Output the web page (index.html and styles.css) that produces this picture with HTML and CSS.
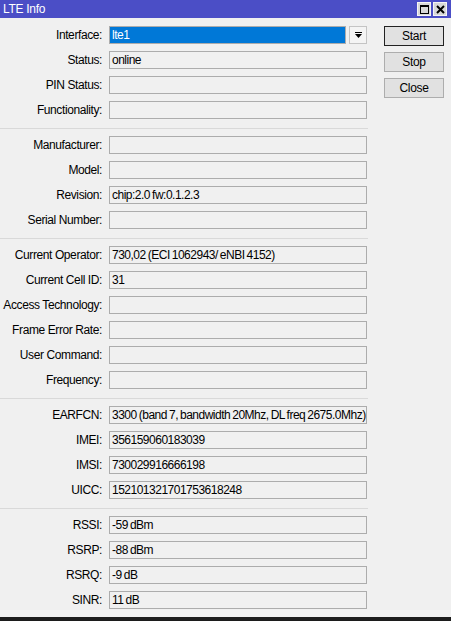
FILE: index.html
```html
<!DOCTYPE html>
<html lang="en">
<head>
    <meta charset="UTF-8">
    <meta name="viewport" content="width=device-width, initial-scale=1.0">
    <title>LTE Info</title>
    <link rel="stylesheet" href="styles.css">
</head>
<body>
    <div class="window">
        <div class="titlebar">
            <span class="title">LTE Info</span>
            <div class="title-btns">
                <span class="tb-btn">
                    <svg width="9" height="9" viewBox="0 0 9 9"><rect x="0.5" y="0.5" width="8" height="8" fill="none" stroke="#000"/><rect x="0" y="0" width="9" height="2" fill="#000"/></svg>
                </span>
                <span class="tb-btn">
                    <svg width="9" height="9" viewBox="0 0 9 9"><path d="M1 1L8 8M8 1L1 8" stroke="#000" stroke-width="2"/></svg>
                </span>
            </div>
        </div>

        <div class="content">
            <div class="form">
                <div class="group">
                    <div class="row">
                        <label class="label">Interface:</label>
                        <div class="combo">
                            <div class="field selected">lte1</div>
                            <span class="drop-btn">
                                <svg width="7" height="7" viewBox="0 0 7 7"><rect x="0" y="0" width="7" height="1" fill="#000"/><path d="M0 2H7L3.5 6Z" fill="#000"/></svg>
                            </span>
                        </div>
                    </div>
                    <div class="row"><label class="label">Status:</label><div class="field">online</div></div>
                    <div class="row"><label class="label">PIN Status:</label><div class="field"></div></div>
                    <div class="row"><label class="label">Functionality:</label><div class="field"></div></div>
                </div>

                <div class="group">
                    <div class="row"><label class="label">Manufacturer:</label><div class="field"></div></div>
                    <div class="row"><label class="label">Model:</label><div class="field"></div></div>
                    <div class="row"><label class="label">Revision:</label><div class="field">chip:2.0 fw:0.1.2.3</div></div>
                    <div class="row"><label class="label">Serial Number:</label><div class="field"></div></div>
                </div>

                <div class="group">
                    <div class="row"><label class="label">Current Operator:</label><div class="field">730,02 (ECI 1062943/ eNBI 4152)</div></div>
                    <div class="row"><label class="label">Current Cell ID:</label><div class="field">31</div></div>
                    <div class="row"><label class="label">Access Technology:</label><div class="field"></div></div>
                    <div class="row"><label class="label">Frame Error Rate:</label><div class="field"></div></div>
                    <div class="row"><label class="label">User Command:</label><div class="field"></div></div>
                    <div class="row"><label class="label">Frequency:</label><div class="field"></div></div>
                </div>

                <div class="group">
                    <div class="row"><label class="label">EARFCN:</label><div class="field">3300 (band 7, bandwidth 20Mhz, DL freq 2675.0Mhz)</div></div>
                    <div class="row"><label class="label">IMEI:</label><div class="field">356159060183039</div></div>
                    <div class="row"><label class="label">IMSI:</label><div class="field">730029916666198</div></div>
                    <div class="row"><label class="label">UICC:</label><div class="field">152101321701753618248</div></div>
                </div>

                <div class="group">
                    <div class="row"><label class="label">RSSI:</label><div class="field">-59 dBm</div></div>
                    <div class="row"><label class="label">RSRP:</label><div class="field">-88 dBm</div></div>
                    <div class="row"><label class="label">RSRQ:</label><div class="field">-9 dB</div></div>
                    <div class="row"><label class="label">SINR:</label><div class="field">11 dB</div></div>
                </div>
            </div>

            <div class="actions">
                <button class="btn default">Start</button>
                <button class="btn">Stop</button>
                <button class="btn">Close</button>
            </div>
        </div>
    </div>
</body>
</html>
```

FILE: styles.css
```css
/* Winbox style dialog */
* {
    box-sizing: border-box;
}
html, body {
    margin: 0;
    padding: 0;
}
body {
    width: 451px;
    height: 621px;
    overflow: hidden;
    background: #f0f0f0;
    font-family: "Liberation Sans", Arial, sans-serif;
    font-size: 12px;
    letter-spacing: -0.4px;
    color: #000;
}
.window {
    height: 621px;
    display: flex;
    flex-direction: column;
    border-bottom: 4px solid #1c1c1c;
}
.titlebar {
    flex-shrink: 0;
    height: 18px;
    background: #4b4ec6;
    display: flex;
    align-items: center;
    justify-content: space-between;
    padding: 0 4px 0 3px;
}
.title {
    color: #fff;
    font-size: 12px;
    letter-spacing: -0.3px;
}
.title-btns {
    display: flex;
    gap: 2px;
}
.tb-btn {
    width: 14px;
    height: 14px;
    background: #d8d8d8;
    border: 1px solid #f4f4f4;
    display: flex;
    align-items: center;
    justify-content: center;
}
.content {
    flex: 1;
    display: flex;
    padding-top: 8px;
}
.form {
    width: 368px;
}
.group {
    display: flex;
    flex-direction: column;
    gap: 7px;
    padding: 7px 0 9px;
    border-bottom: 1px solid #d9d9d9;
}
.group:first-child {
    padding-top: 0;
}
.group:last-child {
    border-bottom: none;
    padding-bottom: 0;
}
.row {
    display: flex;
    align-items: center;
    height: 18px;
}
.label {
    width: 103px;
    text-align: right;
    padding-right: 1px;
    margin-right: 6px;
    white-space: nowrap;
}
.field {
    width: 258px;
    height: 18px;
    border: 1px solid #acacac;
    background: #f0f0f0;
    padding: 0 2px;
    line-height: 16px;
    letter-spacing: -0.5px;
    word-spacing: -0.8px;
    white-space: nowrap;
    overflow: hidden;
}
.combo {
    display: flex;
    gap: 3px;
}
.combo .field {
    width: 237px;
}
.field.selected {
    background: #0078d7;
    color: #fff;
}
.drop-btn {
    width: 18px;
    height: 18px;
    border: 1px solid #c4c4c4;
    background: #f4f4f4;
    display: flex;
    align-items: center;
    justify-content: center;
}
.actions {
    margin-left: 16px;
    display: flex;
    flex-direction: column;
    gap: 6px;
}
.btn {
    width: 60px;
    height: 20px;
    border: 1px solid #adadad;
    background: #e1e1e1;
    font-family: inherit;
    font-size: 12px;
    letter-spacing: -0.3px;
    color: #000;
    padding: 0;
}
.btn.default {
    border-color: #222;
}
```
